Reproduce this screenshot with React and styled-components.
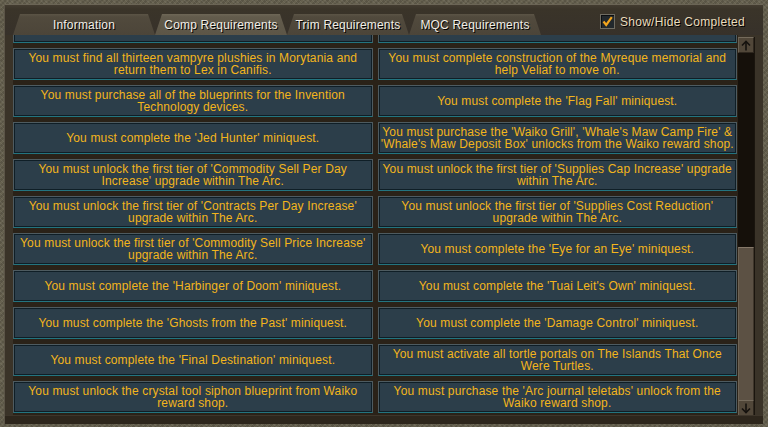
import React, { useLayoutEffect, useRef } from 'react';
import styled, { createGlobalStyle } from 'styled-components';

const GlobalStyle = createGlobalStyle`
  html, body {
    margin: 0;
    padding: 0;
    background: #2a2218;
  }
  * {
    box-sizing: border-box;
  }
`;

const TABS = [
  { label: 'Information', width: 142 },
  { label: 'Comp Requirements', width: 132, active: true },
  { label: 'Trim Requirements', width: 122 },
  { label: 'MQC Requirements', width: 132 },
];

const ROWS = [
  [
    "You must complete the 'Curse of the Empty Lord' miniquest.",
    "You must complete the 'Kennith's Concerns' quest.",
  ],
  [
    'You must find all thirteen vampyre plushies in Morytania and\nreturn them to Lex in Canifis.',
    'You must complete construction of the Myreque memorial and\nhelp Veliaf to move on.',
  ],
  [
    'You must purchase all of the blueprints for the Invention\nTechnology devices.',
    "You must complete the 'Flag Fall' miniquest.",
  ],
  [
    "You must complete the 'Jed Hunter' miniquest.",
    "You must purchase the 'Waiko Grill', 'Whale's Maw Camp Fire' &\n'Whale's Maw Deposit Box' unlocks from the Waiko reward shop.",
  ],
  [
    "You must unlock the first tier of 'Commodity Sell Per Day\nIncrease' upgrade within The Arc.",
    "You must unlock the first tier of 'Supplies Cap Increase' upgrade\nwithin The Arc.",
  ],
  [
    "You must unlock the first tier of 'Contracts Per Day Increase'\nupgrade within The Arc.",
    "You must unlock the first tier of 'Supplies Cost Reduction'\nupgrade within The Arc.",
  ],
  [
    "You must unlock the first tier of 'Commodity Sell Price Increase'\nupgrade within The Arc.",
    "You must complete the 'Eye for an Eye' miniquest.",
  ],
  [
    "You must complete the 'Harbinger of Doom' miniquest.",
    "You must complete the 'Tuai Leit's Own' miniquest.",
  ],
  [
    "You must complete the 'Ghosts from the Past' miniquest.",
    "You must complete the 'Damage Control' miniquest.",
  ],
  [
    "You must complete the 'Final Destination' miniquest.",
    'You must activate all tortle portals on The Islands That Once\nWere Turtles.',
  ],
  [
    'You must unlock the crystal tool siphon blueprint from Waiko\nreward shop.',
    "You must purchase the 'Arc journal teletabs' unlock from the\nWaiko reward shop.",
  ],
];

const Arrow = ({ down }) => (
  <svg width="10" height="11" viewBox="0 0 10 11">
    <g transform={down ? 'rotate(180 5 5.5)' : undefined} fill="none" stroke="#15120e" strokeWidth="1.6">
      <path d="M5 1.5 V10.5" />
      <path d="M1 5.5 L5 1.5 L9 5.5" />
    </g>
  </svg>
);

const RequirementsWindow = () => {
  const listRef = useRef(null);

  useLayoutEffect(() => {
    // the list is scrolled a little past its first row, as in the game window
    if (listRef.current) listRef.current.scrollTop = 24;
  }, []);

  return (
    <Window>
      <Frame>
        <Header>
          <TabRow>
            {TABS.map((t) => (
              <Tab key={t.label} $width={t.width} $active={t.active}>
                <TabLabel>{t.label}</TabLabel>
              </Tab>
            ))}
          </TabRow>
          <Toggle>
            <CheckBox>
              <svg width="13" height="13" viewBox="0 0 13 13">
                <path d="M2.5 6.5 L5.2 10 L10.8 2.2" fill="none" stroke="#f3a51d" strokeWidth="2.2" />
              </svg>
            </CheckBox>
            Show/Hide Completed
          </Toggle>
        </Header>
        <Body>
          <Viewport ref={listRef}>
            <Grid>
              {ROWS.flat().map((text, i) => (
                <Cell key={i}>{text}</Cell>
              ))}
            </Grid>
          </Viewport>
          <ScrollBar>
            <ScrollButton>
              <Arrow />
            </ScrollButton>
            <Track>
              <Thumb $height={153} />
            </Track>
            <ScrollButton>
              <Arrow down />
            </ScrollButton>
          </ScrollBar>
        </Body>
        <Footer />
      </Frame>
    </Window>
  );
};

const App = () => (
  <>
    <GlobalStyle />
    <RequirementsWindow />
  </>
);

const Window = styled('div')`
  width: 768px;
  height: 427px;
  padding: 4px 5px 3px 4px;
  background:
    repeating-linear-gradient(45deg, rgba(255, 255, 255, 0.06) 0 1px, transparent 1px 3px),
    repeating-linear-gradient(-45deg, rgba(0, 0, 0, 0.12) 0 2px, transparent 2px 4px),
    #66614f;
  font-family: 'Liberation Sans', Arial, sans-serif;
`;

const Frame = styled('div')`
  display: flex;
  flex-direction: column;
  height: 100%;
  background: #3a3328;
  border-top: 1px solid #6b6556;
  border-left: 1px solid #5b5447;
`;

const Header = styled('div')`
  display: flex;
  align-items: flex-end;
  height: 30px;
  padding: 0 18px 0 8px;
  background: linear-gradient(#433c30, #3a3429 4px, #37312a);
`;

const TabRow = styled('div')`
  display: flex;
  align-items: flex-end;
`;

const Tab = styled('div')`
  position: relative;
  display: flex;
  align-items: center;
  justify-content: center;
  width: ${(p) => p.$width}px;
  height: 21px;
  padding-top: 1px;
  color: #f1eee6;
  font-size: 12px;
  letter-spacing: 0.2px;
  text-shadow: 1px 1px 0 #000;
  white-space: nowrap;

  &::before {
    content: '';
    position: absolute;
    inset: 0;
    clip-path: polygon(7px 0, calc(100% - 7px) 0, 100% 100%, 0 100%);
    background: ${(p) =>
      p.$active
        ? 'linear-gradient(#6d6656, #625b4c 3px, #5d5647)'
        : 'linear-gradient(#5b5446, #514a3d 3px, #4c4539)'};
  }
`;

const TabLabel = styled('span')`
  position: relative;
`;

const Toggle = styled('div')`
  display: flex;
  align-items: center;
  gap: 5px;
  align-self: flex-start;
  margin: 9px 0 0 auto;
  color: #e9dcbd;
  font-size: 12px;
  letter-spacing: 0.3px;
  text-shadow: 1px 1px 0 #000;
`;

const CheckBox = styled('span')`
  display: flex;
  align-items: center;
  justify-content: center;
  width: 15px;
  height: 15px;
  background: #22282c;
  border: 1px solid #6f6c62;
  box-shadow: inset 1px 1px 0 #0c0e10;
`;

const Body = styled('div')`
  display: flex;
  height: 380px;
  padding: 0 8px 0 8px;
`;

const Viewport = styled('div')`
  flex: 1;
  height: 100%;
  overflow: hidden;
  background: #2a2218;
`;

const Grid = styled('div')`
  display: grid;
  grid-template-columns: 1fr 1fr;
  grid-auto-rows: 32px;
  column-gap: 5px;
  row-gap: 5px;
  padding: 0 1px 4px 0;
`;

const Cell = styled('div')`
  display: flex;
  align-items: center;
  justify-content: center;
  padding: 0 2px;
  background: #2c3e4a;
  border: 1px solid #4e5b60;
  border-bottom-color: #23747f;
  box-shadow: inset 0 0 0 1px #0f1e26;
  color: #f3b51c;
  font-size: 12px;
  line-height: 12px;
  letter-spacing: 0.15px;
  text-align: center;
  white-space: pre;
`;

const ScrollBar = styled('div')`
  display: flex;
  flex-direction: column;
  width: 17px;
  margin: 2px 0 -1px 0;
  background: #1a150e;
`;

const ScrollButton = styled('div')`
  display: flex;
  align-items: center;
  justify-content: center;
  width: 16px;
  height: 16px;
  background: #514739;
  border-top: 1px solid #756b5c;
  border-left: 1px solid #6b6152;
  border-bottom: 1px solid #2f281f;
  border-right: 1px solid #2f281f;
`;

const Track = styled('div')`
  display: flex;
  flex-direction: column;
  justify-content: flex-end;
  flex: 1;
  width: 16px;
  background: #15100a;
`;

const Thumb = styled('div')`
  height: ${(p) => p.$height}px;
  background: #5c5144;
  border-top: 1px solid #86796a;
  border-left: 1px solid #6e6354;
  border-right: 1px solid #3f362b;
`;

const Footer = styled('div')`
  height: 9px;
  background: #2d261c;
  border-top: 1px solid #3d352a;
`;

export default App;
